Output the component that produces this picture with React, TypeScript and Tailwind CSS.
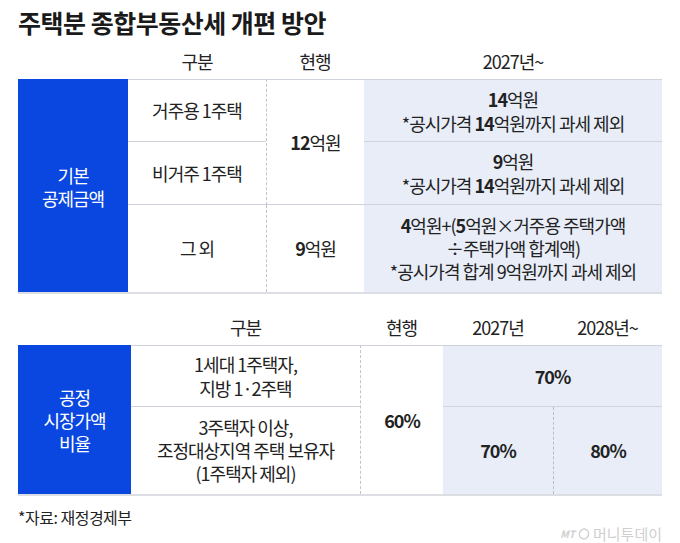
import React from "react";

const B = ({ children }: { children: React.ReactNode }) => <b className="font-bold">{children}</b>;

const Table1 = () => {
  return (
    <div className="grid grid-cols-[110px_138px_98px_298px] grid-rows-[63px_63px_87px] border-b-2 border-[#dcdee3]">
      <div className="row-span-3 bg-[#0a47e0] text-white flex flex-col items-center justify-center leading-[23px] pt-[2px]">
        <span>기본</span>
        <span>공제금액</span>
      </div>
      <div className="border-t border-b border-[#cfd3db] flex items-center justify-center">거주용 1주택</div>
      <div className="row-span-2 border-t border-b border-l border-[#cfd3db] [border-left-style:dashed] [border-left-color:#c4c4c4] flex items-center justify-center">
        <span><B>12</B>억원</span>
      </div>
      <div className="bg-[#e8edf8] border-t border-b border-[#cfd3db] flex flex-col items-center justify-center leading-[24px]">
        <span><B>14</B>억원</span>
        <span>*공시가격 <B>14</B>억원까지 과세 제외</span>
      </div>
      <div className="border-b border-[#cfd3db] flex items-center justify-center">비거주 1주택</div>
      <div className="bg-[#e8edf8] border-b border-[#cfd3db] flex flex-col items-center justify-center leading-[24px]">
        <span><B>9</B>억원</span>
        <span>*공시가격 <B>14</B>억원까지 과세 제외</span>
      </div>
      <div className="flex items-center justify-center">그 외</div>
      <div className="border-l border-[#c4c4c4] [border-left-style:dashed] flex items-center justify-center">
        <span><B>9</B>억원</span>
      </div>
      <div className="bg-[#e8edf8] flex flex-col items-center justify-center leading-[23px]">
        <span><B>4</B>억원+(<B>5</B>억원×거주용 주택가액</span>
        <span>÷주택가액 합계액)</span>
        <span>*공시가격 합계 9억원까지 과세 제외</span>
      </div>
    </div>
  );
};

const Table2 = () => {
  return (
    <div className="grid grid-cols-[113px_229px_83px_110px_109px] grid-rows-[62px_87px] border-b-2 border-[#dcdee3]">
      <div className="row-span-2 bg-[#0a47e0] text-white flex flex-col items-center justify-center leading-[23px] pt-[2px]">
        <span>공정</span>
        <span>시장가액</span>
        <span>비율</span>
      </div>
      <div className="border-t border-b border-[#cfd3db] flex flex-col items-center justify-center leading-[24px]">
        <span>1세대 1주택자,</span>
        <span>지방 1·2주택</span>
      </div>
      <div className="row-span-2 border-t border-l border-[#cfd3db] [border-left-style:dashed] [border-left-color:#c4c4c4] flex items-center justify-center font-bold">
        60%
      </div>
      <div className="col-span-2 bg-[#e8edf8] border-t border-b border-[#cfd3db] flex items-center justify-center font-bold">
        70%
      </div>
      <div className="flex flex-col items-center justify-center leading-[23px]">
        <span>3주택자 이상,</span>
        <span>조정대상지역 주택 보유자</span>
        <span>(1주택자 제외)</span>
      </div>
      <div className="bg-[#e8edf8] flex items-center justify-center font-bold">70%</div>
      <div className="bg-[#e8edf8] border-l border-[#b9bcc4] [border-left-style:dashed] flex items-center justify-center font-bold">
        80%
      </div>
    </div>
  );
};

export default function App() {
  return (
    <div className="w-[680px] h-[543px] bg-white px-[18px] text-[#222] text-[18px] tracking-[-1px] font-['Noto_Sans_CJK_KR','Noto_Sans',sans-serif] overflow-hidden">
      <h1 className="pt-[7px] h-[37px] leading-[30px] text-[25px] tracking-[-0.5px] font-bold text-[#1a1a1a]">
        주택분 종합부동산세 개편 방안
      </h1>
      <div className="mt-[7px] h-[35px] grid grid-cols-[110px_138px_98px_298px] items-center text-center">
        <span></span>
        <span>구분</span>
        <span>현행</span>
        <span>2027년~</span>
      </div>
      <Table1 />
      <div className="mt-[15px] h-[36px] grid grid-cols-[113px_229px_83px_110px_109px] items-center text-center">
        <span></span>
        <span>구분</span>
        <span>현행</span>
        <span>2027년</span>
        <span>2028년~</span>
      </div>
      <Table2 />
      <p className="mt-[11px] h-[20px] leading-[20px] text-[16px] tracking-[-0.5px]">*자료: 재정경제부</p>
      <div className="mt-[-4px] flex justify-end items-center gap-[3px] h-[22px] leading-[22px] text-[#cfcfcf]">
        <span className="italic text-[10px] font-bold tracking-[0px]">MT</span>
        <svg width="12" height="12" viewBox="0 0 12 12" fill="none" stroke="#cfcfcf" strokeWidth="1.4">
          <ellipse cx="6" cy="6" rx="4.5" ry="5" transform="rotate(20 6 6)" />
        </svg>
        <span className="text-[15px] tracking-[0px]">머니투데이</span>
      </div>
    </div>
  );
}
